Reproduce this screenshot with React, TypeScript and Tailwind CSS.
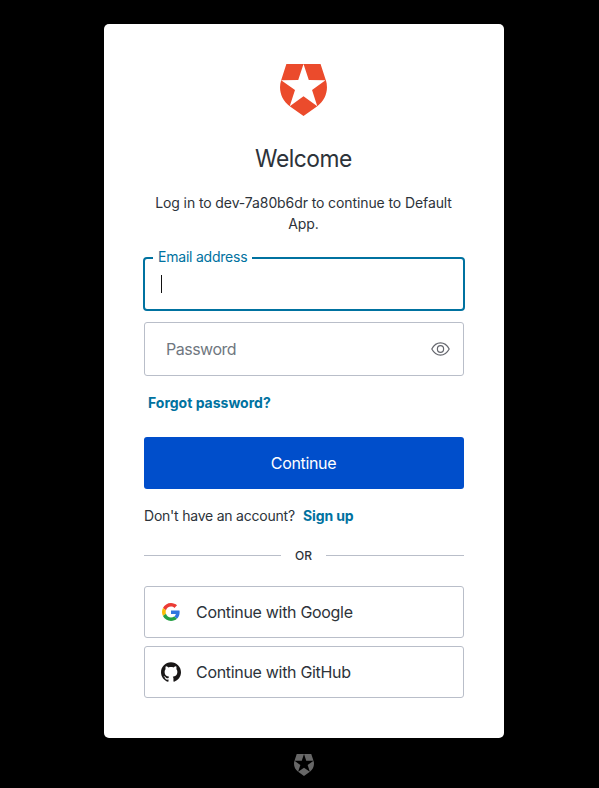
import React from "react";

function ShieldLogo({ className }: { className: string }) {
  return (
    <svg className={className} viewBox="1.5 0 21 24" preserveAspectRatio="none" fill="currentColor">
      <path d="M21.98 7.448L19.62 0H4.347L2.02 7.448c-1.352 4.312.03 9.206 3.815 12.015L12.007 24l6.157-4.552c3.755-2.81 5.182-7.688 3.815-12.015l-6.16 4.58 2.343 7.45-6.157-4.597-6.158 4.58 2.358-7.433-6.188-4.55 7.63-.045L12.008 0l2.356 7.404 7.615.044z" />
    </svg>
  );
}

function EyeIcon() {
  return (
    <svg className="h-[14px] w-[19px] text-[#65676e]" viewBox="0 0 19 14" fill="none" stroke="currentColor" strokeWidth="1.2">
      <path d="M.8 7C3 2.9 6 .9 9.5.9S16 2.9 18.200 7C16 11.100 13 13.100 9.500 13.100S3 11.100.8 7z" strokeLinejoin="round" />
      <ellipse cx="9.5" cy="7" rx="3.100" ry="3.300" />
    </svg>
  );
}

function GoogleIcon() {
  return (
    <svg className="h-[18px] w-[18px]" viewBox="0 0 48 48">
      <path fill="#EB3B35" d="M24 9.500c3.540 0 6.710 1.220 9.210 3.600l6.850-6.850C35.900 2.380 30.470 0 24 0 14.620 0 6.510 5.380 2.560 13.220l7.980 6.190C12.430 13.720 17.740 9.500 24 9.500z" />
      <path fill="#2F76E0" d="M46.980 24.550c0-1.570-.150-3.090-.380-4.550H24v9.020h12.940c-.580 2.960-2.260 5.480-4.780 7.180l7.730 6c4.510-4.180 7.090-10.360 7.090-17.650z" />
      <path fill="#FBBC05" d="M10.530 28.590c-.480-1.450-.760-2.990-.760-4.590s.270-3.140.760-4.590l-7.980-6.190C.920 16.460 0 20.120 0 24s.920 7.540 2.560 10.780l7.970-6.190z" />
      <path fill="#25A045" d="M24 48c6.480 0 11.930-2.130 15.890-5.810l-7.730-6c-2.150 1.450-4.920 2.300-8.160 2.300-6.260 0-11.570-4.220-13.470-9.910l-7.980 6.190C6.510 42.620 14.620 48 24 48z" />
    </svg>
  );
}

function GitHubIcon() {
  return (
    <svg className="h-5 w-5 text-[#191717]" viewBox="0 0 24 24" fill="currentColor">
      <path d="M12 .297c-6.630 0-12 5.373-12 12 0 5.303 3.438 9.800 8.205 11.385.6.113.820-.258.820-.577 0-.285-.010-1.040-.015-2.040-3.338.724-4.042-1.610-4.042-1.610C4.422 18.070 3.633 17.700 3.633 17.700c-1.087-.744.084-.729.084-.729 1.205.084 1.838 1.236 1.838 1.236 1.070 1.835 2.809 1.305 3.495.998.108-.776.417-1.305.760-1.605-2.665-.300-5.466-1.332-5.466-5.930 0-1.310.465-2.380 1.235-3.220-.135-.303-.540-1.523.105-3.176 0 0 1.005-.322 3.300 1.230.960-.267 1.980-.399 3-.405 1.020.006 2.040.138 3 .405 2.280-1.552 3.285-1.230 3.285-1.230.645 1.653.240 2.873.120 3.176.765.840 1.230 1.910 1.230 3.220 0 4.610-2.805 5.625-5.475 5.920.420.360.810 1.096.810 2.220 0 1.606-.015 2.896-.015 3.286 0 .315.210.690.825.570C20.565 22.092 24 17.592 24 12.297c0-6.627-5.373-12-12-12" />
    </svg>
  );
}

function SocialButton({ icon, label }: { icon: React.ReactNode; label: string }) {
  return (
    <button className="flex h-[52px] w-full items-center rounded-[3px] border border-[#b9bec9] pl-4 text-base">
      <span className="flex w-5 justify-center">{icon}</span>
      <span className="ml-[15px] tracking-[-0.31px]">{label}</span>
    </button>
  );
}

export default function App() {
  return (
    <div className="flex h-[788px] flex-col items-center bg-black pt-6 pl-[9px] font-['Inter',sans-serif] text-[#2d333a]">
      <main className="flex h-[714px] w-[400px] flex-col rounded-[5px] bg-white px-10 pt-10">
        <ShieldLogo className="mr-[2px] h-[52px] w-[47px] self-center text-[#eb4b2c]" />
        <h1 className="mt-6 mr-px scale-x-95 text-center text-2xl leading-[38px] tracking-[-0.5px]">Welcome</h1>
        <p className="mt-[14px] mr-px text-center text-sm leading-[21px] tracking-[-0.1px]">
          Log in to dev-7a80b6dr to continue to Default
          <br />
          App.
        </p>

        <div className="relative -mx-px mt-[23px] flex h-[54px] items-center rounded-[4px] border-2 border-[#0072a0] pl-4">
          <label className="absolute -top-[13px] left-2 bg-white px-[5px] text-sm leading-[21px] tracking-[-0.22px] text-[#0072a0]">
            Email address
          </label>
          <span className="h-[18px] w-px bg-[#111]" />
        </div>
        <div className="mt-[11px] flex h-[54px] items-center justify-between rounded-[3px] border border-[#b9bec9] pr-[13px] pl-[21px]">
          <span className="text-base tracking-[-0.5px] text-[#6f7780]">Password</span>
          <EyeIcon />
        </div>
        <a className="mt-4 ml-1 text-sm leading-[22px] font-bold text-[#0072a0]">Forgot password?</a>
        <button className="mt-[23px] h-[52px] rounded-[3px] bg-[#004ecb] pr-px text-base tracking-[-0.35px] text-white">
          Continue
        </button>
        <p className="mt-4 text-sm leading-[22px] tracking-[-0.22px]">
          Don't have an account?
          <a className="ml-2 font-bold tracking-[-0.1px] text-[#0072a0]">Sign up</a>
        </p>
        <div className="mt-[18px] flex h-5 items-center text-xs font-medium">
          <span className="h-px w-[137px] bg-[#b9bec9]" />
          <span className="w-[45px] pt-px text-center">OR</span>
          <span className="h-px flex-1 bg-[#b9bec9]" />
        </div>
        <div className="mt-[21px] flex flex-col gap-2">
          <SocialButton icon={<GoogleIcon />} label="Continue with Google" />
          <SocialButton icon={<GitHubIcon />} label="Continue with GitHub" />
        </div>
      </main>
      <ShieldLogo className="mt-4 h-[22px] w-5 text-[#676767]" />
    </div>
  );
}
